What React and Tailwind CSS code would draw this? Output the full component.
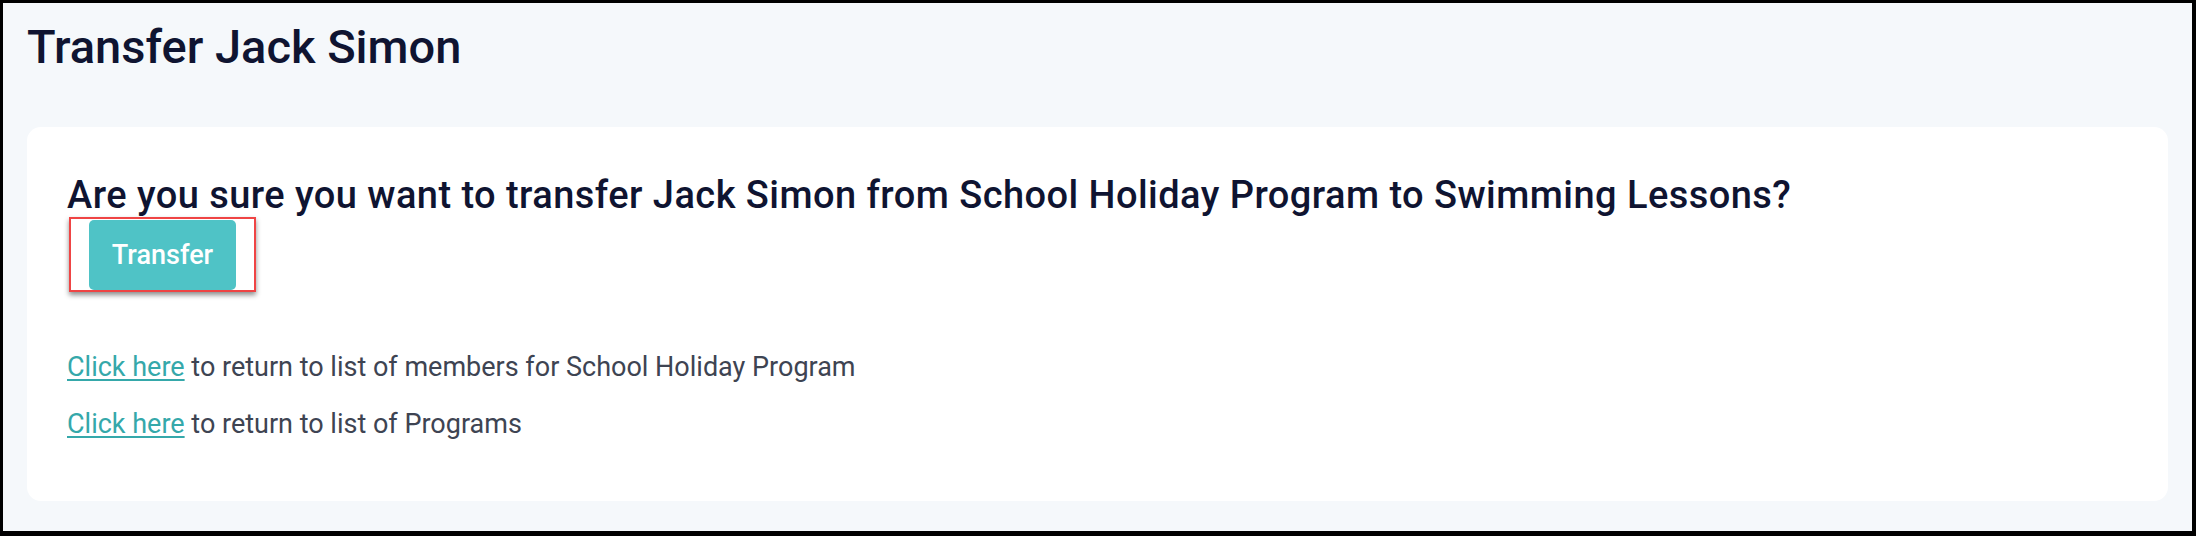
import React from "react";

export default function App() {
  const font = { fontFamily: "Roboto, 'Liberation Sans', sans-serif" };
  return (
    <div
      style={font}
      className="h-[536px] w-full overflow-hidden border-black border-t-[3px] border-l-[3px] border-r-[4px] border-b-[5px] bg-[#f5f8fb] flex flex-col"
    >
      <div className="pl-[24px] pt-[16px]">
        <h1 className="text-[47px] leading-[56px] font-medium text-[#0f1431]">
          Transfer Jack Simon
        </h1>
      </div>
      <div className="mx-[24px] mt-[52px] mb-[30px] flex-1 rounded-[14px] bg-white pl-[40px] pt-[47px]">
        <h2 className="text-[38px] leading-[43px] font-medium text-[#0f1431] tracking-[0.45px]">
          Are you sure you want to transfer Jack Simon from School Holiday Program to Swimming Lessons?
        </h2>
        <div className="ml-[2px] inline-flex border-2 border-[#ef4444] px-[18px] pt-[1px] pb-[0px] shadow-[0_3px_5px_rgba(0,0,0,0.45)] bg-white">
          <button className="h-[70px] w-[147px] rounded-[5px] bg-[#4fc3c6] text-[27px] font-medium text-white">
            Transfer
          </button>
        </div>
        <div className="mt-[59px] text-[27px] leading-[32px] text-[#3e4452]">
          <p>
            <a href="#" className="text-[#35a8aa] underline decoration-[2px] underline-offset-[3px]">
              Click here
            </a>{" "}
            to return to list of members for School Holiday Program
          </p>
          <p className="mt-[25px]">
            <a href="#" className="text-[#35a8aa] underline decoration-[2px] underline-offset-[3px]">
              Click here
            </a>{" "}
            to return to list of Programs
          </p>
        </div>
      </div>
    </div>
  );
}
